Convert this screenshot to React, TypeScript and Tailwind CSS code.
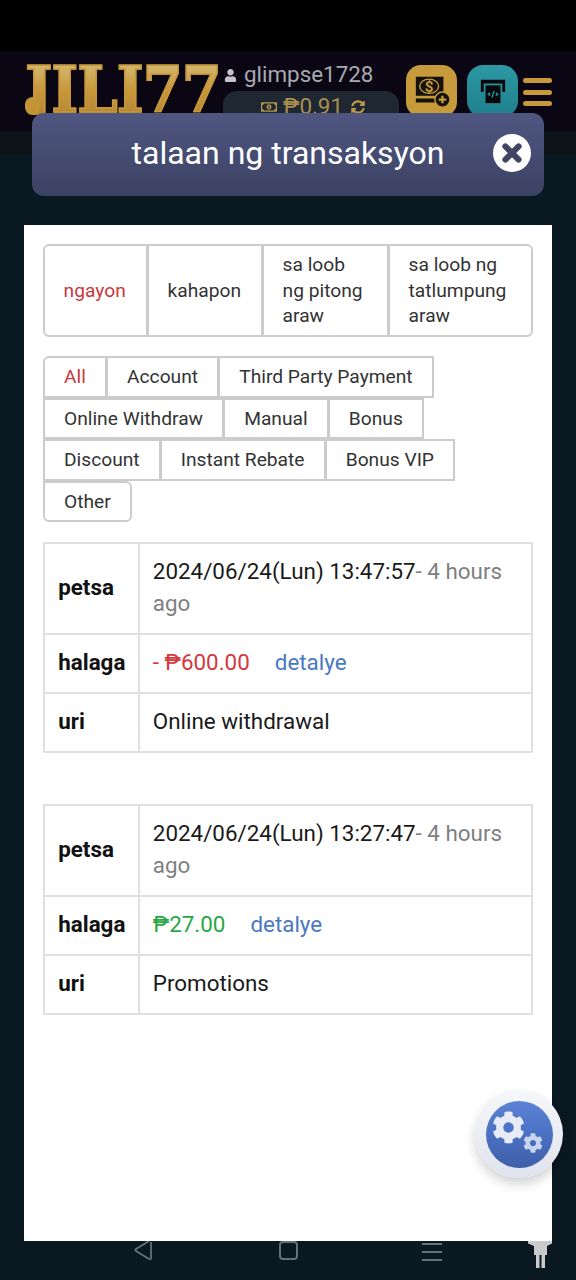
import { FaCog, FaUser, FaRegMoneyBillAlt, FaSyncAlt } from 'react-icons/fa';

const periods = [
  { label: 'ngayon', width: 'w-[105px]', active: true },
  { label: 'kahapon', width: 'w-[116px]' },
  { label: 'sa loob ng pitong araw', width: 'w-[127px]' },
  { label: 'sa loob ng tatlumpung araw', width: 'w-[145px]' },
];

const categories = [
  ['All', 'Account', 'Third Party Payment'],
  ['Online Withdraw', 'Manual', 'Bonus'],
  ['Discount', 'Instant Rebate', 'Bonus VIP'],
  ['Other'],
];

const records = [
  {
    date: '2024/06/24(Lun) 13:47:57',
    amount: '- ₱600.00',
    amountColor: 'text-[#d2383c]',
    type: 'Online withdrawal',
  },
  {
    date: '2024/06/24(Lun) 13:27:47',
    amount: '₱27.00',
    amountColor: 'text-[#28a745]',
    type: 'Promotions',
  },
];

function Header() {
  return (
    <div className="flex h-[80px] items-start bg-[#0a0614]">
      <div className="relative ml-[25px] mt-[6px] h-[58px] w-[193px] overflow-hidden">
        <div className="whitespace-nowrap bg-gradient-to-b from-[#d6c27c] via-[#c8983a] to-[#b08232] bg-clip-text font-['DejaVu_Serif_Condensed','DejaVu_Serif',serif] text-[64px] font-bold leading-[66px] tracking-[-1px] text-transparent [-webkit-text-stroke:1.5px_#c8983a]">
          JILI77
        </div>
        <span className="absolute left-0 top-[40px] h-[18px] w-[15px] rounded-full bg-[#c39536]" />
      </div>
      <div className="ml-[5px] flex w-[176px] flex-col">
        <div className="mt-[10px] flex h-[28px] items-center gap-[7px] pl-[1px] text-[22.4px] text-[#a9a9b0]">
          <FaUser className="text-[13px] text-[#c4c4ca]" />
          glimpse1728
        </div>
        <div className="mt-[2px] h-[40px] rounded-t-[14px] bg-[#1f2832] pl-[38px] pt-[2px] text-[22.4px] text-[#a98f4e]">
          <div className="flex h-[28px] items-center">
            <FaRegMoneyBillAlt className="text-[16px] text-[#b89a4a]" />
            <span className="ml-[6px]">₱0.91</span>
            <FaSyncAlt className="ml-[8px] text-[14px] text-[#b89a4a]" />
          </div>
        </div>
      </div>
      <div className="ml-[7px] mt-[14px] flex h-[52px] w-[51px] items-center justify-center rounded-[15px] bg-[#c79a3b]">
        <svg viewBox="0 0 40 36" className="h-[36px] w-[38px]">
          <path d="M3 3h29v20H3zM3 26h21v4H3z" fill="#15110c" />
          <ellipse cx="17" cy="13" rx="10" ry="7.500" fill="none" stroke="#c79a3b" strokeWidth="1.500" />
          <text x="17" y="19" textAnchor="middle" fontSize="16" fontWeight="700" fill="#c79a3b" fontFamily="Roboto">$</text>
          <circle cx="31" cy="27" r="8" fill="#15110c" stroke="#c79a3b" strokeWidth="1.500" />
          <path d="M31 23v8M27 27h8" stroke="#c79a3b" strokeWidth="2.400" />
        </svg>
      </div>
      <div className="ml-[10px] mt-[14px] flex h-[52px] w-[51px] items-center justify-center rounded-[16px] bg-gradient-to-b from-[#2c98a3] to-[#1f7f8c]">
        <svg viewBox="0 0 30 30" className="h-[30px] w-[28px]">
          <path d="M2 3h26v13h-3V7H5v9H2z" fill="#07080c" />
          <path d="M7 9h16v19H7z" fill="#07080c" />
          <path d="M12 17l-2 1.500 2 1.500M18 17l2 1.500-2 1.500M16 15l-2 7" stroke="#2c98a3" strokeWidth="1.400" fill="none" />
        </svg>
      </div>
      <div className="ml-[5px] mt-[27px] flex w-[29px] flex-col gap-[6.500px]">
        <span className="h-[5px] rounded-full bg-[#c69a3a]" />
        <span className="h-[5px] rounded-full bg-[#c69a3a]" />
        <span className="h-[5px] rounded-full bg-[#c69a3a]" />
      </div>
    </div>
  );
}

function PeriodTabs() {
  return (
    <div className="flex h-[93px]">
      {periods.map((p, i) => (
        <div
          key={p.label}
          className={`flex items-center border-2 border-[#ccc] pl-[18.4px] pr-[20px] ${p.width} ${
            i > 0 ? '-ml-[1px]' : 'rounded-l-[6px]'
          } ${i === periods.length - 1 ? 'rounded-r-[6px]' : ''} ${p.active ? 'text-[#c9383c]' : 'text-[#333]'}`}
        >
          {p.label}
        </div>
      ))}
    </div>
  );
}

function CategoryTabs() {
  return (
    <div className="mt-[19px] flex flex-col">
      {categories.map((row, r) => (
        <div key={r} className="flex h-[41.5px]">
          {row.map((c, i) => (
            <div
              key={c}
              className={`flex h-[41.6px] items-center border-2 border-[#ccc] bg-white pl-[18.8px] pr-[19.4px] ${
                i > 0 ? '-ml-[1px]' : ''
              } ${c === 'All' ? 'rounded-tl-[6px] text-[#c9383c]' : 'text-[#333]'} ${
                c === 'Other' ? 'rounded-b-[6px] rounded-tr-[6px]' : ''
              }`}
            >
              {c}
            </div>
          ))}
        </div>
      ))}
    </div>
  );
}

function RecordTable({ date, amount, amountColor, type }: (typeof records)[number]) {
  const label = 'w-[92px] border-2 border-[#e0e0e0] px-[13px] pb-[3px] text-left font-bold text-[#111]';
  const cell = 'border-2 border-[#e0e0e0] pb-[14px] pl-[12.4px] pr-[13px] pt-[11px] text-[#1a1a1a]';
  return (
    <table className="w-[490px] border-collapse text-[22.4px] leading-[32px]">
      <tbody>
        <tr>
          <th className={label}>petsa</th>
          <td className={cell}>
            {date}
            <span className="text-[#808080]">- 4 hours ago</span>
          </td>
        </tr>
        <tr>
          <th className={label}>halaga</th>
          <td className={cell}>
            <span className={amountColor}>{amount}</span>
            <span className="ml-[25px] text-[#4a78c2]">detalye</span>
          </td>
        </tr>
        <tr>
          <th className={label}>uri</th>
          <td className={cell}>{type}</td>
        </tr>
      </tbody>
    </table>
  );
}

function NavBar() {
  return (
    <div className="flex flex-1 items-start">
      <svg viewBox="0 0 20 20" className="ml-[133px] h-[20px] w-[20px]" fill="none" stroke="#68707a" strokeWidth="1.800">
        <path d="M18 1v16q0 2-2 1L3 10q-1-1 0-2l13-8" />
      </svg>
      <div className="ml-[126px] h-[19px] w-[19px] rounded-[4px] border-2 border-[#68707a]" />
      <div className="ml-[124px] mt-[2px] flex w-[20px] flex-col gap-[6.500px]">
        <span className="h-[1.6px] bg-[#68707a]" />
        <span className="h-[1.6px] bg-[#68707a]" />
        <span className="h-[1.6px] bg-[#68707a]" />
      </div>
      <svg viewBox="0 0 24 28" className="ml-[86px] h-[28px] w-[24px]" fill="#c9cbcc">
        <path d="M0 0h24v2.500l-5 2.500v9h-2v13h-3.500V14h-2v13H8V14H6V5L0 2.500z" />
      </svg>
    </div>
  );
}

export default function App() {
  return (
    <div className="relative flex h-[1280px] w-[576px] flex-col overflow-hidden bg-[#0a1822] font-['Roboto',sans-serif]">
      <div className="h-[51px] shrink-0 bg-black" />
      <Header />
      <div className="h-[24px] shrink-0 bg-[#0c1418]" />

      <div className="relative mx-[32px] -mt-[42px] flex h-[83px] shrink-0 items-center justify-center rounded-[12px] bg-gradient-to-b from-[#4f5680] to-[#3c4263] pb-[3px] text-[32px] text-white">
        talaan ng transaksyon
        <span className="absolute right-[13px] top-[21px] flex h-[38px] w-[38px] items-center justify-center rounded-full bg-white">
          <svg viewBox="0 0 20 20" className="h-[22px] w-[22px]">
            <path d="M4 4l12 12M16 4L4 16" stroke="#3f4562" strokeWidth="5.500" strokeLinecap="round" />
          </svg>
        </span>
      </div>

      <div className="mx-[24px] mt-[29px] h-[1016px] shrink-0 bg-white pl-[19.2px] pt-[19px] text-[19.2px] leading-[25.6px]">
        <PeriodTabs />
        <CategoryTabs />
        <div className="mt-[20px] flex flex-col gap-[51px]">
          {records.map((r) => (
            <RecordTable key={r.date} {...r} />
          ))}
        </div>
      </div>

      <NavBar />

      <div className="absolute left-[475px] top-[1090px] flex h-[88px] w-[88px] items-center justify-center rounded-full bg-gradient-to-b from-[#f6f7fa] to-[#dfe3ee] shadow-[0_6px_12px_rgba(0,0,0,0.18)]">
        <div className="relative h-[67px] w-[67px] rounded-full bg-gradient-to-b from-[#5c83d6] via-[#4b71c4] to-[#3f5fa8]">
          <FaCog className="absolute left-[6px] top-[10px] text-[33px] text-[#e8ecf6]" />
          <FaCog className="absolute left-[37px] top-[32px] text-[20px] text-[#c9d5ee]" />
        </div>
      </div>
    </div>
  );
}
